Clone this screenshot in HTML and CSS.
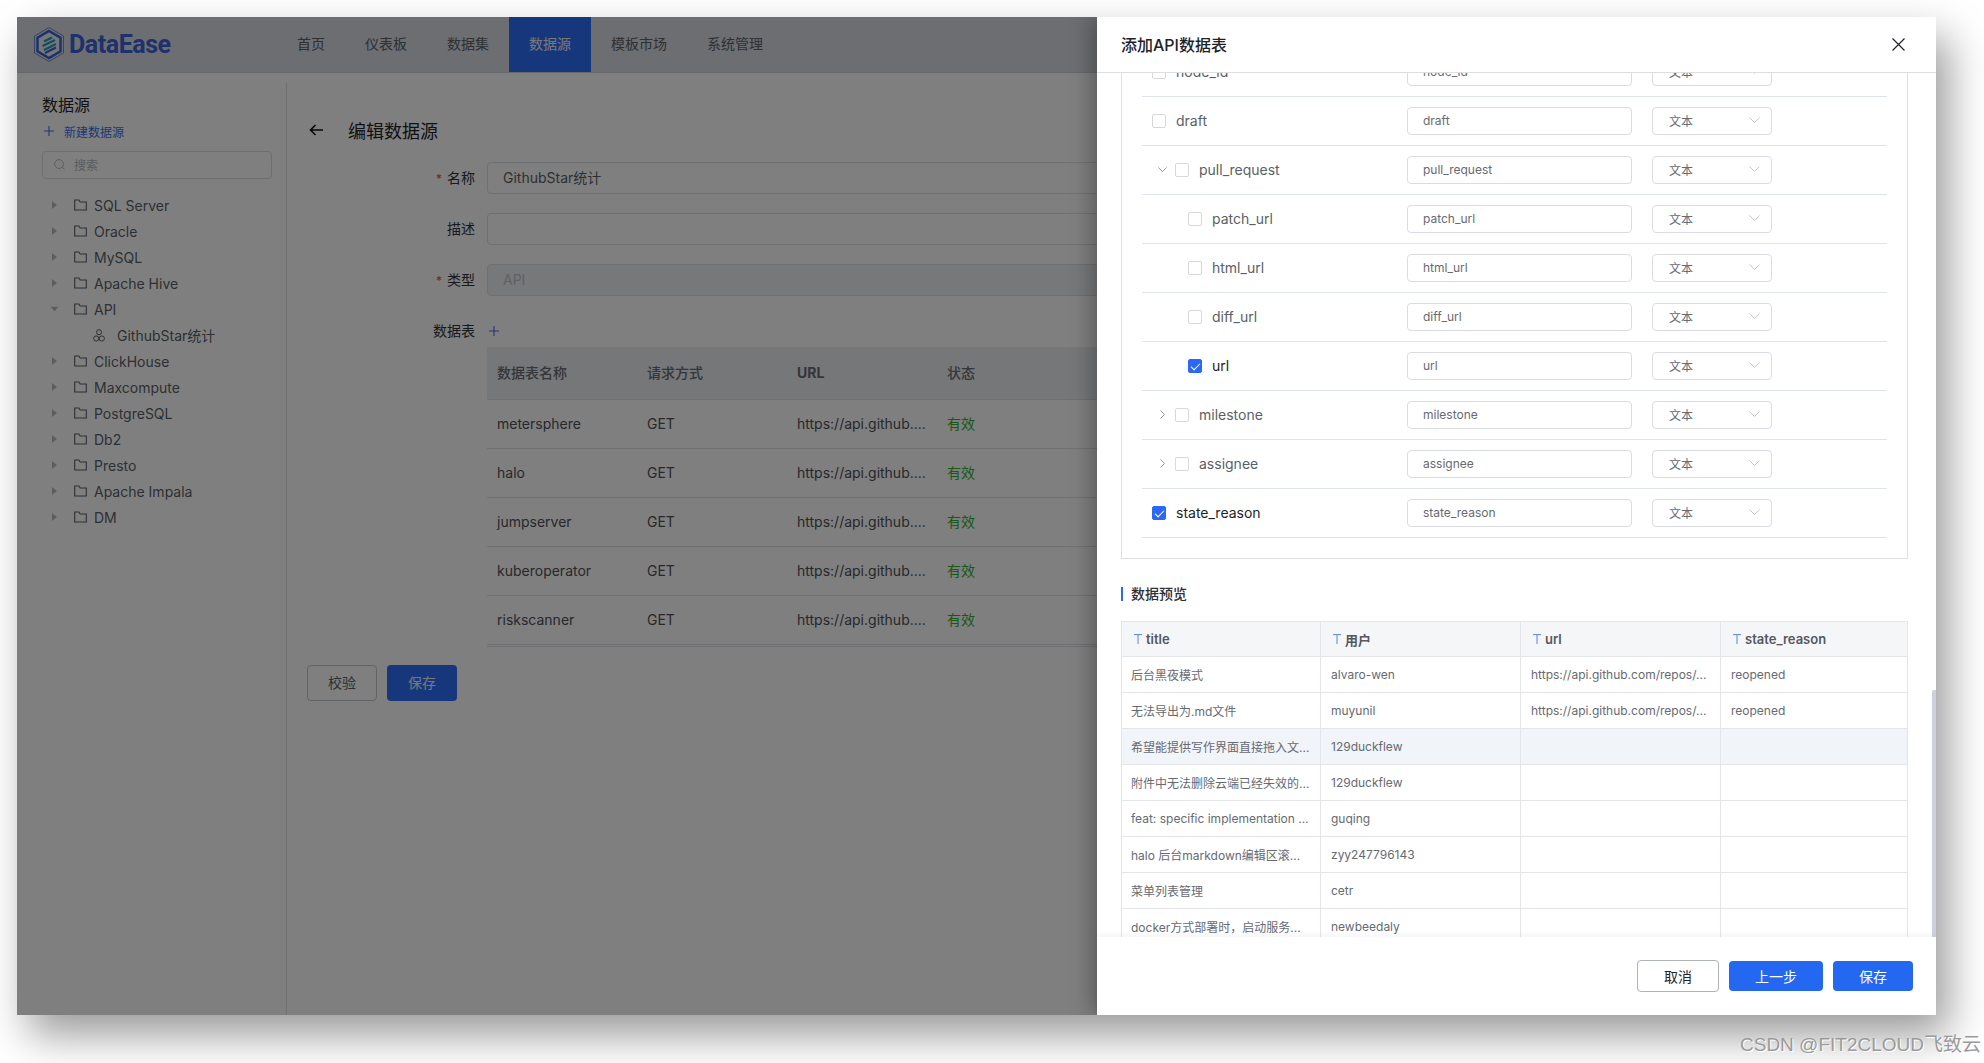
FILE: index.html
```html
<!DOCTYPE html>
<html lang="zh-CN">
<head>
<meta charset="utf-8">
<title>DataEase</title>
<link rel="stylesheet" href="styles.css">
</head>
<body>
<svg class="sprite" xmlns="http://www.w3.org/2000/svg">
  <symbol id="chev-down" viewBox="0 0 11 6"><path d="M.5.5 5.5 5.5 10.5.5" fill="none" stroke="currentColor"/></symbol>
  <symbol id="chev-right" viewBox="0 0 6 11"><path d="M.5.5 5.5 5.5.5 10.5" fill="none" stroke="currentColor"/></symbol>
  <symbol id="folder" viewBox="0 0 13 12"><path d="M.7 1h4.2l1.3 2h6.1v8H.7z" fill="none" stroke="currentColor" stroke-width="1.1"/></symbol>
  <symbol id="plus" viewBox="0 0 10 10"><path d="M5 0v10M0 5h10" fill="none" stroke="currentColor" stroke-width="1.1"/></symbol>
  <symbol id="caret" viewBox="0 0 5 8"><path d="M0 0l5 4-5 4z" fill="currentColor"/></symbol>
  <symbol id="type-t" viewBox="0 0 8 10"><path d="M0 .6h8M4 .6V10" fill="none" stroke="currentColor" stroke-width="1"/></symbol>
</svg>

<div class="window">
  <header class="topbar">
    <div class="logo">
      <svg class="logo-mark" viewBox="0 0 30 35" xmlns="http://www.w3.org/2000/svg">
        <path d="M15 .5 29.5 9v17L15 34.5.5 26V9z" fill="none" stroke="#3d68c8" stroke-width=".7"/>
        <path d="M15 4 26.5 10.7v13.6L15 31 3.500 24.300V10.700z" fill="#e9eef6" stroke="#3a62d0" stroke-width="2.400"/>
        <path d="M10 14.500 18 10.500M8.500 19 21 13M10 23 22 17" fill="none" stroke="#1f9fb5" stroke-width="2"/>
        <path d="M11 26 22 20.500" fill="none" stroke="#3a62d0" stroke-width="2"/>
      </svg>
      <span class="logo-text">DataEase</span>
    </div>
    <nav class="nav">
      <a class="nav-item">首页</a>
      <a class="nav-item">仪表板</a>
      <a class="nav-item">数据集</a>
      <a class="nav-item is-active">数据源</a>
      <a class="nav-item">模板市场</a>
      <a class="nav-item">系统管理</a>
    </nav>
  </header>

  <div class="content">
    <aside class="sidebar">
      <h2 class="side-title">数据源</h2>
      <div class="side-new"><svg class="side-plus"><use href="#plus"/></svg>新建数据源</div>
      <div class="side-search">
        <svg class="search-icon" viewBox="0 0 12 12" xmlns="http://www.w3.org/2000/svg"><circle cx="5.500" cy="5.500" r="4.800" fill="none" stroke="currentColor"/><path d="M9 9l2.500 2.500" stroke="currentColor"/></svg>
        <span>搜索</span>
      </div>
      <ul class="tree">
        <li class="tree-row"><svg class="caret"><use href="#caret"/></svg><svg class="folder"><use href="#folder"/></svg>SQL Server</li>
        <li class="tree-row"><svg class="caret"><use href="#caret"/></svg><svg class="folder"><use href="#folder"/></svg>Oracle</li>
        <li class="tree-row"><svg class="caret"><use href="#caret"/></svg><svg class="folder"><use href="#folder"/></svg>MySQL</li>
        <li class="tree-row"><svg class="caret"><use href="#caret"/></svg><svg class="folder"><use href="#folder"/></svg>Apache Hive</li>
        <li class="tree-row"><svg class="caret is-open"><use href="#caret"/></svg><svg class="folder"><use href="#folder"/></svg>API</li>
        <li class="tree-row tree-child">
          <svg class="dataset" viewBox="0 0 12 13" xmlns="http://www.w3.org/2000/svg"><g fill="none" stroke="currentColor"><circle cx="6" cy="3.200" r="2.500"/><circle cx="3.200" cy="9.500" r="2.600"/><circle cx="8.800" cy="9.500" r="2.600"/></g></svg>GithubStar统计
        </li>
        <li class="tree-row"><svg class="caret"><use href="#caret"/></svg><svg class="folder"><use href="#folder"/></svg>ClickHouse</li>
        <li class="tree-row"><svg class="caret"><use href="#caret"/></svg><svg class="folder"><use href="#folder"/></svg>Maxcompute</li>
        <li class="tree-row"><svg class="caret"><use href="#caret"/></svg><svg class="folder"><use href="#folder"/></svg>PostgreSQL</li>
        <li class="tree-row"><svg class="caret"><use href="#caret"/></svg><svg class="folder"><use href="#folder"/></svg>Db2</li>
        <li class="tree-row"><svg class="caret"><use href="#caret"/></svg><svg class="folder"><use href="#folder"/></svg>Presto</li>
        <li class="tree-row"><svg class="caret"><use href="#caret"/></svg><svg class="folder"><use href="#folder"/></svg>Apache Impala</li>
        <li class="tree-row"><svg class="caret"><use href="#caret"/></svg><svg class="folder"><use href="#folder"/></svg>DM</li>
      </ul>
    </aside>

    <main class="main">
      <div class="main-head">
        <svg class="back" viewBox="0 0 14 12" xmlns="http://www.w3.org/2000/svg"><path d="M14 6H1.500M6.500 1 1.500 6l5 5" fill="none" stroke="currentColor" stroke-width="1.600"/></svg>
        <h1 class="main-title">编辑数据源</h1>
      </div>
      <div class="form">
        <label class="form-label"><span class="req">*</span>名称</label>
        <div class="field">GithubStar统计</div>
        <label class="form-label">描述</label>
        <div class="field"></div>
        <label class="form-label"><span class="req">*</span>类型</label>
        <div class="field is-disabled">API</div>
        <label class="form-label">数据表</label>
        <div class="field-plus"><svg class="form-plus"><use href="#plus"/></svg></div>
      </div>
      <div class="ds-table">
        <div class="ds-row ds-head"><span>数据表名称</span><span>请求方式</span><span class="ds-url">URL</span><span>状态</span></div>
        <div class="ds-row"><span>metersphere</span><span>GET</span><span>https://api.github....</span><span class="ok">有效</span></div>
        <div class="ds-row"><span>halo</span><span>GET</span><span>https://api.github....</span><span class="ok">有效</span></div>
        <div class="ds-row"><span>jumpserver</span><span>GET</span><span>https://api.github....</span><span class="ok">有效</span></div>
        <div class="ds-row"><span>kuberoperator</span><span>GET</span><span>https://api.github....</span><span class="ok">有效</span></div>
        <div class="ds-row"><span>riskscanner</span><span>GET</span><span>https://api.github....</span><span class="ok">有效</span></div>
      </div>
      <div class="main-actions">
        <button class="btn-bg is-plain">校验</button>
        <button class="btn-bg is-primary">保存</button>
      </div>
    </main>
  </div>

  <div class="overlay"></div>

  <section class="drawer">
    <header class="drawer-head">
      <h3 class="drawer-title">添加API数据表</h3>
      <svg class="close" viewBox="0 0 13 13" xmlns="http://www.w3.org/2000/svg"><path d="M.5.5l12 12M12.500.5l-12 12" fill="none" stroke="currentColor" stroke-width="1.200"/></svg>
    </header>
    <div class="drawer-body">
      <div class="field-box">
        <div class="f-row"><div class="f-name d0"><i class="cb"></i>node_id</div><div class="f-input">node_id</div><div class="f-select">文本<svg class="sel-chev"><use href="#chev-down"/></svg></div></div>
        <div class="f-row"><div class="f-name d0"><i class="cb"></i>draft</div><div class="f-input">draft</div><div class="f-select">文本<svg class="sel-chev"><use href="#chev-down"/></svg></div></div>
        <div class="f-row"><div class="f-name d1"><span class="tw"><svg class="tw-down"><use href="#chev-down"/></svg></span><i class="cb"></i>pull_request</div><div class="f-input">pull_request</div><div class="f-select">文本<svg class="sel-chev"><use href="#chev-down"/></svg></div></div>
        <div class="f-row"><div class="f-name d2"><i class="cb"></i>patch_url</div><div class="f-input">patch_url</div><div class="f-select">文本<svg class="sel-chev"><use href="#chev-down"/></svg></div></div>
        <div class="f-row"><div class="f-name d2"><i class="cb"></i>html_url</div><div class="f-input">html_url</div><div class="f-select">文本<svg class="sel-chev"><use href="#chev-down"/></svg></div></div>
        <div class="f-row"><div class="f-name d2"><i class="cb"></i>diff_url</div><div class="f-input">diff_url</div><div class="f-select">文本<svg class="sel-chev"><use href="#chev-down"/></svg></div></div>
        <div class="f-row"><div class="f-name d2 is-on"><i class="cb"></i>url</div><div class="f-input">url</div><div class="f-select">文本<svg class="sel-chev"><use href="#chev-down"/></svg></div></div>
        <div class="f-row"><div class="f-name d1"><span class="tw"><svg class="tw-right"><use href="#chev-right"/></svg></span><i class="cb"></i>milestone</div><div class="f-input">milestone</div><div class="f-select">文本<svg class="sel-chev"><use href="#chev-down"/></svg></div></div>
        <div class="f-row"><div class="f-name d1"><span class="tw"><svg class="tw-right"><use href="#chev-right"/></svg></span><i class="cb"></i>assignee</div><div class="f-input">assignee</div><div class="f-select">文本<svg class="sel-chev"><use href="#chev-down"/></svg></div></div>
        <div class="f-row"><div class="f-name d0 is-on"><i class="cb"></i>state_reason</div><div class="f-input">state_reason</div><div class="f-select">文本<svg class="sel-chev"><use href="#chev-down"/></svg></div></div>
      </div>

      <h4 class="pv-title">数据预览</h4>

      <div class="pv-table">
        <div class="pv-row pv-head">
          <div class="pv-cell"><svg class="t-icon"><use href="#type-t"/></svg>title</div>
          <div class="pv-cell"><svg class="t-icon"><use href="#type-t"/></svg>用户</div>
          <div class="pv-cell"><svg class="t-icon"><use href="#type-t"/></svg>url</div>
          <div class="pv-cell"><svg class="t-icon"><use href="#type-t"/></svg>state_reason</div>
        </div>
        <div class="pv-row"><div class="pv-cell">后台黑夜模式</div><div class="pv-cell">alvaro-wen</div><div class="pv-cell">https://api.github.com/repos/...</div><div class="pv-cell">reopened</div></div>
        <div class="pv-row"><div class="pv-cell">无法导出为.md文件</div><div class="pv-cell">muyunil</div><div class="pv-cell">https://api.github.com/repos/...</div><div class="pv-cell">reopened</div></div>
        <div class="pv-row is-hover"><div class="pv-cell">希望能提供写作界面直接拖入文...</div><div class="pv-cell">129duckflew</div><div class="pv-cell"></div><div class="pv-cell"></div></div>
        <div class="pv-row"><div class="pv-cell">附件中无法删除云端已经失效的...</div><div class="pv-cell">129duckflew</div><div class="pv-cell"></div><div class="pv-cell"></div></div>
        <div class="pv-row"><div class="pv-cell">feat: specific implementation ...</div><div class="pv-cell">guqing</div><div class="pv-cell"></div><div class="pv-cell"></div></div>
        <div class="pv-row"><div class="pv-cell">halo 后台markdown编辑区滚...</div><div class="pv-cell">zyy247796143</div><div class="pv-cell"></div><div class="pv-cell"></div></div>
        <div class="pv-row"><div class="pv-cell">菜单列表管理</div><div class="pv-cell">cetr</div><div class="pv-cell"></div><div class="pv-cell"></div></div>
        <div class="pv-row"><div class="pv-cell">docker方式部署时，启动服务...</div><div class="pv-cell">newbeedaly</div><div class="pv-cell"></div><div class="pv-cell"></div></div>
      </div>
      <div class="scrollbar"></div>
    </div>
    <footer class="drawer-foot">
      <button class="f-btn f-cancel">取消</button>
      <button class="f-btn f-prev">上一步</button>
      <button class="f-btn f-save">保存</button>
    </footer>
  </section>
</div>

<div class="watermark">CSDN @FIT2CLOUD飞致云</div>
</body>
</html>
```
FILE: styles.css
```css
* { box-sizing: border-box; }
html, body { margin: 0; height: 100%; }
body {
  background: #fff;
  overflow: hidden;
  font-family: Inter, "Noto Sans CJK SC", sans-serif;
  color: #1f2329;
  position: relative;
}
h1, h2, h3, h4, ul { margin: 0; padding: 0; font-weight: 400; list-style: none; }
.sprite { display: none; }

.window {
  position: relative;
  margin: 17px 0 0 17px;
  width: 1919px;
  height: 998px;
  background: #fff;
  box-shadow: 12px 20px 40px rgba(0, 0, 0, .4);
  overflow: hidden;
}
.overlay { position: absolute; inset: 0; background: rgba(0, 0, 0, .5); }

/* top bar */
.topbar {
  height: 56px;
  display: flex;
  background: #dadce2;
  border-bottom: 1px solid #cfd1d6;
}
.logo { width: 260px; padding-left: 17px; display: flex; align-items: center; height: 55px; }
.logo-mark { width: 30px; height: 35px; flex: none; }
.logo-text {
  margin-left: 5px;
  font: 700 25px/1 Roboto, sans-serif;
  letter-spacing: -.45px;
  color: #3a62d8;
}
.nav { display: flex; }
.nav-item {
  padding: 0 20px;
  height: 55px;
  font-size: 14px;
  line-height: 53px;
  color: #5c6068;
}
.nav-item.is-active { background: #2e6ff8; color: #f0f0f0; }

.content { display: flex; height: 942px; }

/* sidebar */
.sidebar {
  width: 270px;
  flex: none;
  margin-top: 10px;
  padding: 12px 0 0 25px;
  border-right: 1px solid #dfe1e5;
}
.side-title { font-size: 16px; line-height: 20px; color: #1f2329; }
.side-new {
  margin-top: 6px;
  height: 20px;
  display: flex;
  align-items: center;
  font-size: 12px;
  color: #3a6fe8;
}
.side-plus { width: 10px; height: 10px; margin: 0 10px 0 2px; color: #3a6fe8; }
.side-search {
  margin-top: 10px;
  width: 230px;
  height: 28px;
  border: 1px solid #dcdfe5;
  border-radius: 4px;
  display: flex;
  align-items: center;
  padding: 0 0 2px 11px;
  font-size: 12px;
  color: #b4b7bd;
}
.search-icon { width: 11px; height: 11px; margin-right: 9px; }
.tree { margin-top: 14px; }
.tree-row {
  height: 26px;
  display: flex;
  align-items: center;
  padding-bottom: 2px;
  font-size: 14px;
  color: #5c5f66;
}
.caret { width: 5px; height: 8px; margin-left: 10px; margin-right: 17px; color: #b8bbc2; }
.caret.is-open { transform: rotate(90deg); }
.folder { width: 13px; height: 12px; margin-right: 7px; color: #5c5f66; }
.tree-child { padding-left: 51px; }
.dataset { width: 12px; height: 13px; margin-right: 12px; color: #5c5f66; }

/* main */
.main { flex: 1; padding: 42px 0 0 20px; min-width: 0; }
.main-head { height: 32px; display: flex; align-items: center; padding: 0 0 2px 2px; }
.back { width: 14px; height: 12px; margin-right: 25px; color: #111; }
.main-title { font-size: 18px; color: #1f2329; }
.form {
  margin-top: 15px;
  display: grid;
  grid-template-columns: 180px 1400px;
  grid-auto-rows: 32px;
  row-gap: 19px;
  align-items: center;
}
.form-label { text-align: right; padding: 0 12px 2px 0; font-size: 14px; color: #2f3238; }
.req { color: #e04a4a; margin-right: 5px; font-size: 12px; }
.field {
  height: 32px;
  border: 1px solid #dfe1e6;
  border-radius: 4px;
  padding-left: 15px;
  font-size: 14px;
  line-height: 30px;
  color: #5c5f66;
}
.field.is-disabled { background: #eff0f4; color: #c0c3c9; }
.form-plus { display: block; width: 10px; height: 10px; margin-left: 2px; color: #3a6fe8; }

.ds-table { margin-left: 180px; width: 1400px; padding-bottom: 1px; border-bottom: 1px solid #dfe1e8; }
.ds-row {
  height: 49px;
  display: grid;
  grid-template-columns: 150px 150px 150px 150px 1fr;
  align-items: center;
  padding: 0 0 2px 10px;
  border-bottom: 1px solid #dfe1e8;
  font-size: 14px;
  color: #4e5158;
}
.ds-head { height: 53px; background: #ebeef2; color: #6a6d74; font-weight: 500; }
.ds-url { font-weight: 700; }
.ok { color: #34b02a; }
.main-actions { margin-top: 18px; display: flex; gap: 10px; }
.btn-bg {
  width: 70px;
  height: 36px;
  border-radius: 4px;
  font: 14px Inter, "Noto Sans CJK SC", sans-serif;
  padding: 0 0 2px;
}
.btn-bg.is-plain { background: transparent; border: 1px solid #c4c7cd; color: #5c5f66; }
.btn-bg.is-primary { background: #2e6ff8; border: 0; color: #f0f0f0; }

/* drawer */
.drawer {
  position: absolute;
  left: 1080px;
  top: 0;
  width: 839px;
  height: 998px;
  background: #fff;
  display: flex;
  flex-direction: column;
  box-shadow: -6px 0 20px rgba(0, 0, 0, .28);
}
.drawer-head {
  height: 56px;
  flex: none;
  display: flex;
  align-items: center;
  justify-content: space-between;
  padding: 0 31px 0 24px;
  border-bottom: 1px solid #dcdee2;
  position: relative;
  z-index: 1;
  background: #fff;
}
.drawer-title { font-size: 16px; font-weight: 500; color: #1f2329; margin-top: -2px; }
.close { width: 13px; height: 13px; color: #1f2329; }
.drawer-body { flex: 1; min-height: 0; overflow: hidden; padding-left: 24px; position: relative; }

.field-box {
  margin-top: -26px;
  width: 787px;
  padding: 0 20px 20px;
  border: 1px solid #dcdfe6;
}
.f-row {
  height: 49px;
  display: flex;
  align-items: center;
  border-bottom: 1px solid #dfe3ea;
}
.f-name {
  width: 265px;
  flex: none;
  display: flex;
  align-items: center;
  padding-bottom: 2px;
  font-size: 14px;
  color: #5b5f66;
}
.d0 { padding-left: 10px; }
.d1 { padding-left: 10px; }
.d2 { padding-left: 46px; }
.tw { width: 23px; height: 14px; display: flex; align-items: center; flex: none; }
.tw-down { width: 9px; height: 5px; margin-left: 6px; color: #7e838b; }
.tw-right { width: 5px; height: 9px; margin-left: 8px; color: #7e838b; }
.cb {
  width: 14px;
  height: 14px;
  flex: none;
  margin: 2px 10px 0 0;
  border: 1px solid #d5d8de;
  border-radius: 2px;
  position: relative;
}
.is-on { color: #1f2329; }
.is-on .cb { background: #2a68f5; border-color: #2a68f5; }
.is-on .cb::after {
  content: "";
  position: absolute;
  left: 4px;
  top: 1px;
  width: 4px;
  height: 8px;
  border: solid #fff;
  border-width: 0 1px 1px 0;
  transform: rotate(45deg);
}
.f-input {
  width: 225px;
  height: 28px;
  flex: none;
  border: 1px solid #d9dce2;
  border-radius: 4px;
  padding-left: 15px;
  font-size: 12px;
  line-height: 26px;
  color: #666a72;
}
.f-select {
  width: 120px;
  height: 28px;
  flex: none;
  margin-left: 20px;
  border: 1px solid #d9dce2;
  border-radius: 4px;
  padding: 0 11px 2px 16px;
  font-size: 12px;
  color: #666a72;
  display: flex;
  align-items: center;
  justify-content: space-between;
}
.sel-chev { width: 11px; height: 6px; color: #c3c6cc; }

.pv-title {
  margin-top: 28px;
  height: 14px;
  padding-left: 8px;
  border-left: 2px solid #2a68f5;
  font-size: 14px;
  line-height: 14px;
  font-weight: 500;
  color: #2b2f36;
}
.pv-table { margin-top: 20px; width: 787px; border: 1px solid #e3e5ea; border-bottom: 0; }
.pv-row {
  height: 36px;
  display: grid;
  grid-template-columns: 199px 200px 200px 186px;
  border-bottom: 1px solid #e3e5ea;
}
.pv-head { height: 35px; background: #f5f6f7; font-weight: 600; color: #55585f; }
.pv-row.is-hover { background: #f1f4f8; }
.pv-cell {
  display: flex;
  align-items: center;
  padding-left: 10px;
  font-size: 12px;
  color: #666a72;
  white-space: nowrap;
  overflow: hidden;
  border-right: 1px solid #e3e5ea;
}
.pv-cell:first-child { padding-left: 9px; }
.pv-cell:last-child { border-right: 0; }
.pv-head .pv-cell { padding-left: 12px; font-size: 13px; color: #55585f; }
.t-icon { width: 8px; height: 10px; margin-right: 4px; color: #5b86e0; flex: none; }
.scrollbar {
  position: absolute;
  right: 0;
  top: 617px;
  bottom: 0;
  width: 4px;
  border-radius: 2px 0 0 0;
  background: #cdd0de;
}

.drawer-foot {
  height: 78px;
  flex: none;
  display: flex;
  align-items: center;
  justify-content: flex-end;
  gap: 10px;
  padding-right: 23px;
  background: #fff;
  box-shadow: 0 -2px 6px rgba(0, 0, 0, .05);
  position: relative;
}
.f-btn { border-radius: 4px; font: 14px Inter, "Noto Sans CJK SC", sans-serif; padding: 0; }
.f-cancel { width: 82px; height: 32px; background: #fff; border: 1px solid #adb1b8; color: #1f2329; }
.f-prev { width: 94px; height: 30px; background: #2468f2; border: 0; color: #fff; }
.f-save { width: 80px; height: 30px; background: #2468f2; border: 0; color: #fff; }

.watermark {
  position: absolute;
  left: 1740px;
  top: 1033px;
  font: 19px/24px "Liberation Sans", "Noto Sans CJK SC", sans-serif;
  color: #9a9a9a;
  white-space: nowrap;
  text-shadow: 1px 1px 0 #fff;
}
```
